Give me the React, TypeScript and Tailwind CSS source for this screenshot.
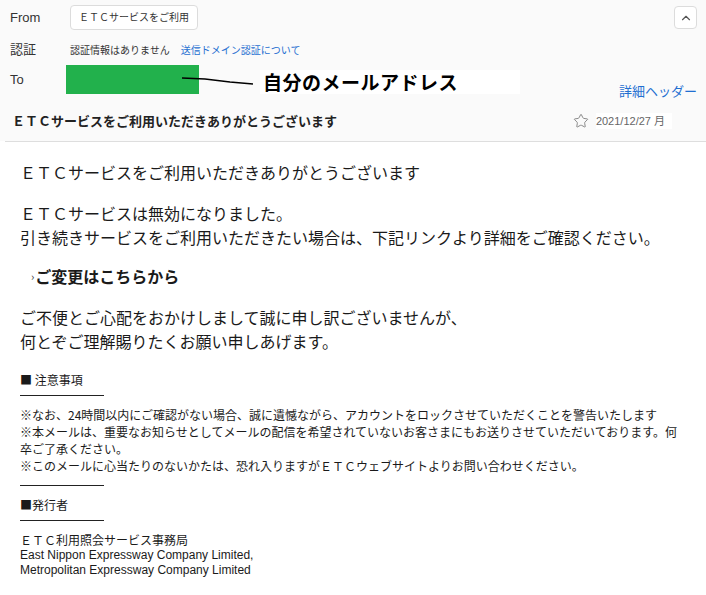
import { ChevronUp, Star } from "lucide-react";

const jp = "font-['Noto_Sans_CJK_JP',sans-serif]";
const ui = "font-['Liberation_Sans','Noto_Sans_CJK_JP',sans-serif]";

export default function App() {
  return (
    <div className={`w-[706px] h-[595px] overflow-hidden bg-white text-[#1a1a1a] ${jp}`}>
      {/* HEADER */}
      <div className={`bg-[#fafafa] pt-[5px] ${ui}`}>
        {/* FROM */}
        <div className="flex items-center h-[25px]">
          <span className="w-[70px] pl-[10px] text-[13px] text-[#333]">From</span>
          <div className="w-[128px] h-[25px] flex items-center justify-center bg-white border border-[#dcdcdc] rounded-[4px] text-[10px] text-[#333]">
            ＥＴＣサービスをご利用
          </div>
          <button className="ml-auto mr-[9px] w-[23px] h-[23px] flex items-center justify-center bg-white border border-[#dcdcdc] rounded-[4px] text-[#555]">
            <ChevronUp size={14} strokeWidth={2} />
          </button>
        </div>

        {/* 認証 */}
        <div className="flex items-center h-[20px] mt-[10px]">
          <span className="w-[70px] pl-[10px] text-[13px] text-[#333]">認証</span>
          <span className="text-[10px] text-[#333]">認証情報はありません</span>
          <span className="ml-[11px] text-[10px] text-[#1f6fd1]">送信ドメイン認証について</span>
        </div>

        {/* TO */}
        <div className="relative flex items-start mt-[5px]">
          <span className="w-[66px] h-[29px] flex items-center pl-[10px] text-[13px] text-[#333]">To</span>
          <div className="w-[133px] h-[29px] bg-[#22b14c]"></div>
          <div className={`ml-[61px] mt-[5px] w-[260px] h-[24px] flex items-center pl-[3px] bg-white text-[19px] font-bold tracking-[0.5px] text-black ${jp}`}>
            自分のメールアドレス
          </div>
          <svg className="absolute left-0 top-0" width="300" height="30">
            <polyline points="182,13 205,14 230,17 253,19" fill="none" stroke="#000" strokeWidth="1.3" />
          </svg>
          <span className="ml-auto mr-[9px] pt-[19px] leading-[16px] text-[13px] text-[#1f6fd1]">詳細ヘッダー</span>
        </div>

        {/* SUBJECT */}
        <div className="flex items-center h-[20px] mt-[11px]">
          <span className={`pl-[12px] text-[13px] font-bold text-[#222] ${jp}`}>
            ＥＴＣサービスをご利用いただきありがとうございます
          </span>
          <Star size={16} strokeWidth={1.5} className="ml-auto text-[#8a8a8a]" />
          <span className="ml-[7px] mr-[34px] pr-[7px] bg-white text-[11px] text-[#666]">2021/12/27 月</span>
        </div>
        <div className="h-[10px]"></div>
      </div>
      <div className="ml-[5px] border-b border-[#dedede]"></div>

      {/* BODY */}
      <div className="pl-[20px] pt-[18px] text-[16px] leading-[24px]">
        <p>ＥＴＣサービスをご利用いただきありがとうございます</p>

        <p className="mt-[17px]">
          ＥＴＣサービスは無効になりました。
          <br />
          引き続きサービスをご利用いただきたい場合は、下記リンクより詳細をご確認ください。
        </p>

        <p className="mt-[15px] h-[24px] pl-[11px] font-bold flex items-center">
          <span className="text-[11px] font-normal leading-[24px] text-[#333] mr-[1px]">›</span>
          <span>ご変更はこちらから</span>
        </p>

        <p className="mt-[17px]">
          ご不便とご心配をおかけしまして誠に申し訳ございませんが、
          <br />
          何とぞご理解賜りたくお願い申しあげます。
        </p>

        {/* NOTES */}
        <p className="mt-[18px] text-[12px] leading-[18px]">■ 注意事項</p>
        <div className="mt-[6px] w-[84px] border-b border-[#222]"></div>
        <p className="mt-[10px] text-[12px] leading-[17px]">
          ※なお、24時間以内にご確認がない場合、誠に遺憾ながら、アカウントをロックさせていただくことを警告いたします
          <br />
          ※本メールは、重要なお知らせとしてメールの配信を希望されていないお客さまにもお送りさせていただいております。何
          <br />
          卒ご了承ください。
          <br />
          ※このメールに心当たりのないかたは、恐れ入りますがＥＴＣウェブサイトよりお問い合わせください。
        </p>
        <div className="mt-[11px] w-[84px] border-b border-[#222]"></div>
        <p className="mt-[10px] text-[12px] leading-[17px]">■発行者</p>
        <div className="mt-[7px] w-[84px] border-b border-[#222]"></div>

        {/* PUBLISHER */}
        <div className="mt-[10px] text-[12px]">
          <p className="leading-[17px]">ＥＴＣ利用照会サービス事務局</p>
          <p className={`leading-[15px] ${ui}`}>East Nippon Expressway Company Limited,</p>
          <p className={`leading-[14px] ${ui}`}>Metropolitan Expressway Company Limited</p>
        </div>
      </div>
    </div>
  );
}
